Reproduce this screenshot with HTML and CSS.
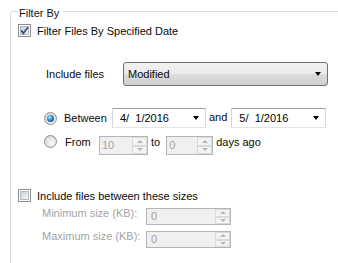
FILE: index.html
```html
<!DOCTYPE html>
<html lang="en">
<head>
  <meta charset="UTF-8">
  <title>Filter By</title>
  <link rel="stylesheet" href="styles.css">
</head>
<body>

  <div class="group">
    <span class="group-title">Filter By</span>

    <div class="row row-date-check">
      <span class="check">
        <svg class="tick" width="13" height="13" viewBox="0 0 13 13">
          <path d="M3.2 6.4 L5.4 9.2 L10 3.2" fill="none" stroke="#3b4f91" stroke-width="1.8"/>
        </svg>
      </span>
      <span class="check-text">Filter Files By Specified Date</span>
    </div>

    <div class="row row-include">
      <span class="include-label">Include files</span>
      <div class="combo">
        <span class="combo-text">Modified</span>
        <span class="arrow"></span>
      </div>
    </div>

    <div class="row row-between">
      <span class="radio radio-on"></span>
      <span class="between-label">Between</span>
      <div class="date date-start">
        <span class="date-text">4/  1/2016</span>
        <span class="arrow"></span>
      </div>
      <span class="joiner">and</span>
      <div class="date date-end">
        <span class="date-text">5/  1/2016</span>
        <span class="arrow"></span>
      </div>
    </div>

    <div class="row row-from">
      <span class="radio"></span>
      <span class="from-label">From</span>
      <div class="spin spin-from">
        <span class="spin-value">10</span>
        <span class="spin-buttons"><span class="spin-up"></span><span class="spin-down"></span></span>
      </div>
      <span class="to-label">to</span>
      <div class="spin spin-to">
        <span class="spin-value">0</span>
        <span class="spin-buttons"><span class="spin-up"></span><span class="spin-down"></span></span>
      </div>
      <span class="ago-label">days ago</span>
    </div>

    <div class="row row-size-check">
      <span class="check"></span>
      <span class="check-text">Include files between these sizes</span>
    </div>

    <div class="row row-size row-min">
      <span class="size-label">Minimum size (KB):</span>
      <div class="spin spin-size">
        <span class="spin-value size-value">0</span>
        <span class="spin-buttons"><span class="spin-up"></span><span class="spin-down"></span></span>
      </div>
    </div>

    <div class="row row-size row-max">
      <span class="size-label">Maximum size (KB):</span>
      <div class="spin spin-size">
        <span class="spin-value size-value">0</span>
        <span class="spin-buttons"><span class="spin-up"></span><span class="spin-down"></span></span>
      </div>
    </div>

  </div>

</body>
</html>
```

FILE: styles.css
```css
body {
  margin: 0;
  overflow: hidden;
  background: #fff;
  font-family: "Liberation Sans", Arial, sans-serif;
  font-size: 11px;
  color: #0a0a0a;
}

/* group box: top and left edges only, the rest runs off the window */
.group {
  position: relative;
  box-sizing: border-box;
  width: 328px;
  height: 252px;
  margin: 11px 0 0 10px;
  padding: 11px 0 0 7px;
  border-top: 1px solid #d3dde4;
  border-left: 1px solid #d3dde4;
  border-top-left-radius: 3px;
}

.group-title {
  position: absolute;
  top: -5px;
  left: 7px;
  padding: 0 3px 0 1px;
  line-height: 13px;
  background: #fff;
  color: #141414;
}

.row {
  display: flex;
  align-items: center;
  white-space: pre;
}

.row-date-check {
  height: 15px;
}

.row-include {
  margin-top: 24px;
  height: 24px;
}

.row-between {
  margin-top: 22px;
  height: 20px;
}

.row-from {
  margin-top: 6px;
  height: 19px;
}

.row-size-check {
  margin-top: 35px;
  height: 15px;
}

.row-min {
  margin-top: 3px;
  height: 17px;
}

.row-max {
  margin-top: 6px;
  height: 17px;
}

/* checkbox */
.check {
  position: relative;
  box-sizing: border-box;
  width: 13px;
  height: 13px;
  margin-right: 6px;
  border: 1px solid #8e8f8f;
  background: #fff;
  flex: none;
}

.check::before {
  content: "";
  position: absolute;
  left: 1px;
  top: 1px;
  right: 1px;
  bottom: 1px;
  border: 1px solid #b4b8bf;
  background: linear-gradient(135deg, #cbcfd5, #f6f6f6);
}

.tick {
  position: absolute;
  left: -1px;
  top: -1px;
}

/* radio */
.radio {
  position: relative;
  box-sizing: border-box;
  width: 13px;
  height: 13px;
  margin-left: 26px;
  border-radius: 50%;
  border: 1px solid #8e8f8f;
  background: radial-gradient(circle at 60% 65%, #fdfdfd 0, #e6e6e6 45%, #cfcfcf 100%);
  flex: none;
}

.radio-on::after {
  content: "";
  position: absolute;
  left: 2px;
  top: 2px;
  width: 7px;
  height: 7px;
  border-radius: 50%;
  background: radial-gradient(circle at 40% 35%, #b9ecff 0, #3a9fdc 35%, #115c9e 70%, #0c3a6a 100%);
}

/* dropdowns */
.include-label {
  margin-left: 28px;
  width: 77px;
}

.combo {
  display: flex;
  align-items: center;
  box-sizing: border-box;
  width: 205px;
  height: 24px;
  padding: 0 6px 0 4px;
  border: 1px solid #707070;
  border-radius: 3px;
  background: linear-gradient(#f2f2f2 0, #ebebeb 48%, #dddddd 52%, #cfcfcf 100%);
}

.combo-text {
  flex: 1;
}

.arrow {
  width: 0;
  height: 0;
  border-left: 3.5px solid transparent;
  border-right: 3.5px solid transparent;
  border-top: 4px solid #000;
}

.between-label {
  margin-left: 7px;
  width: 48px;
}

.date {
  display: flex;
  align-items: center;
  box-sizing: border-box;
  height: 20px;
  padding: 0 6px 0 7px;
  border: 1px solid #abadb3;
  border-color: #9ea0a6 #d6d8dc #e3e5e9 #d6d8dc;
  background: #fff;
}

.date-start {
  width: 94px;
}

.date-end {
  width: 95px;
}

.date-text {
  flex: 1;
  color: #000;
}

.joiner {
  margin: 0 4px 2px 3px;
}

/* spin boxes (disabled) */
.from-label {
  margin: 0 0 4px 8px;
  width: 34px;
}

.row-from .radio {
  margin-bottom: 4px;
}

.to-label {
  margin: 0 6px 4px 3px;
}

.ago-label {
  margin: 0 0 4px 3px;
}

.spin {
  display: flex;
  box-sizing: border-box;
  height: 19px;
  margin-top: 4px;
  border: 1px solid #b3b6b9;
  background: #f0f0f0;
}

.spin-from {
  width: 49px;
}

.spin-to {
  width: 47px;
}

.spin-size {
  width: 85px;
  height: 17px;
}

.spin-value {
  flex: 1;
  padding-left: 2px;
  line-height: 17px;
  color: #a6a39e;
}

.size-value {
  padding-left: 4px;
  line-height: 15px;
  color: #a69f94;
}

.spin-buttons {
  display: flex;
  flex-direction: column;
  width: 15px;
}

.spin-up,
.spin-down {
  flex: 1;
  display: flex;
  align-items: center;
  justify-content: center;
  border: 1px solid #d9dadb;
  background: #f4f4f4;
}

.spin-up::after {
  content: "";
  border-left: 3px solid transparent;
  border-right: 3px solid transparent;
  border-bottom: 3px solid #b7b7b7;
}

.spin-down::after {
  content: "";
  border-left: 3px solid transparent;
  border-right: 3px solid transparent;
  border-top: 3px solid #b7b7b7;
}

/* size section */
.size-label {
  margin: 0 0 4px 24px;
  width: 104px;
  color: #a3a3a3;
}
```
